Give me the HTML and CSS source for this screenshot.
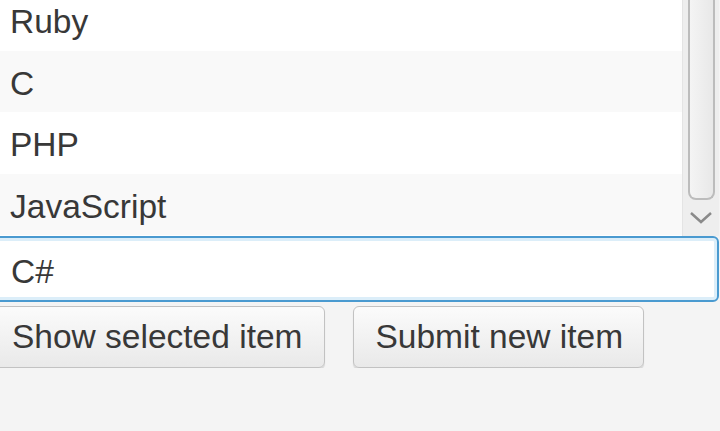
FILE: index.html
```html
<!DOCTYPE html>
<html lang="en">
  <head>
    <meta charset="UTF-8" />
    <title>ListView Demo</title>
    <link rel="stylesheet" href="styles.css">
  </head>
  <body>
    <div class="app">
      <div class="list">
        <div class="list-view">
          <div class="rows">
            <div class="row">Ruby</div>
            <div class="row odd">C</div>
            <div class="row">PHP</div>
            <div class="row odd">JavaScript</div>
          </div>
        </div>
        <div class="scrollbar">
          <div class="thumb"></div>
          <svg class="arrow" width="24" height="14" viewBox="0 0 24 14">
            <path d="M2 2 L12 11 L22 2" fill="none" stroke="#8a8a8a" stroke-width="2.5" />
          </svg>
        </div>
      </div>

      <input class="field" type="text" value="C#" />

      <div class="actions">
        <button class="btn">Show selected item</button>
        <button class="btn submit-btn">Submit new item</button>
      </div>
    </div>
  </body>
</html>
```

FILE: styles.css
```css
body {
  margin: 0;
  background: #f4f4f4;
  font-family: "Liberation Sans", Arial, sans-serif;
  color: #383838;
  overflow: hidden;
}

.app {
  width: 732px;
  margin-left: -13px;
}

.list {
  display: flex;
  height: 236px;
  background: #fff;
}

.list-view {
  flex: 1;
  overflow: hidden;
}

.rows {
  margin-top: -11px;
}

.row {
  height: 61.5px;
  line-height: 66px;
  padding-left: 23px;
  font-size: 33.5px;
  background: #fff;
}

.row.odd {
  background: #f9f9f9;
}

.scrollbar {
  width: 36px;
  background: #eeeeee;
  border-left: 1px solid #e4e4e4;
  display: flex;
  flex-direction: column;
  align-items: center;
}

.thumb {
  width: 27px;
  height: 200px;
  box-sizing: border-box;
  border: 2px solid #bcbcbc;
  border-top: none;
  border-radius: 0 0 8px 8px;
  background: linear-gradient(to right, #f4f4f4, #e8e8e8);
}

.arrow {
  margin-top: 11px;
}

.field {
  display: block;
  box-sizing: border-box;
  width: 732px;
  height: 66px;
  margin: 0;
  padding: 5px 0 0 22px;
  border: 2px solid #4a9ad0;
  border-radius: 6px;
  box-shadow: inset 0 0 0 3px #dceef9;
  background: #fff;
  font-family: inherit;
  font-size: 33.5px;
  color: #383838;
  outline: none;
}

.actions {
  display: flex;
  gap: 28px;
  margin-top: 4px;
}

.btn {
  height: 62px;
  padding: 0 22px 0 24px;
  border: 1px solid #c2c2c2;
  border-radius: 6px;
  background: linear-gradient(to bottom, #fbfbfb, #e9e9e9);
  box-shadow: 0 2px 1px rgba(0, 0, 0, 0.12);
  font-family: inherit;
  font-size: 33.5px;
  color: #383838;
}

.submit-btn {
  padding: 0 20px 0 21px;
}
```
